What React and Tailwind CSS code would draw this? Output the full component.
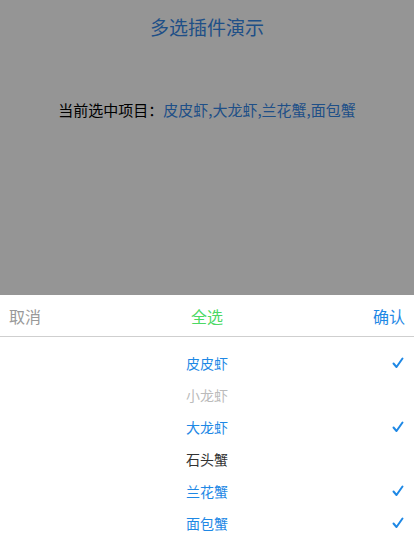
import React, { useState } from 'react';

const items = [
  { name: '皮皮虾', checked: true },
  { name: '小龙虾', disabled: true },
  { name: '大龙虾', checked: true },
  { name: '石头蟹' },
  { name: '兰花蟹', checked: true },
  { name: '面包蟹', checked: true },
];

function Check() {
  return (
    <svg width="12" height="12" viewBox="0 0 12 12" className="text-[#1e88e5]">
      <path d="M1.5 6.5 L4.5 10 L10.5 1.5" fill="none" stroke="currentColor" strokeWidth="2" strokeLinecap="round" strokeLinejoin="round" />
    </svg>
  );
}

export default function App() {
  const [list] = useState(items);
  const selected = list.filter((i) => i.checked).map((i) => i.name).join(',');

  return (
    <div className="relative h-[557px] w-[414px] overflow-hidden bg-white font-['Noto_Sans_CJK_SC',sans-serif]">
      {/* page behind the picker */}
      <div className="flex flex-col items-center">
        <h1 className="mt-[13px] text-[19px] leading-[28px] text-[#3688e8]">多选插件演示</h1>
        <p className="mt-[58px] text-[15px] leading-[22px] text-black">
          当前选中项目：<span className="text-[#3688e8]">{selected}</span>
        </p>
      </div>

      {/* mask */}
      <div className="absolute inset-0 bg-black/[0.415]"></div>

      {/* bottom sheet */}
      <div className="absolute bottom-0 left-0 right-0 h-[262px] bg-white">
        <div className="flex h-[42px] items-center justify-between border-b border-[#cfcfcf] px-[9px] text-[16px]">
          <span className="text-[#999]">取消</span>
          <span className="text-[#4cd964]">全选</span>
          <span className="text-[#1e88e5]">确认</span>
        </div>
        <ul className="pt-[10px]">
          {list.map((item) => (
            <li key={item.name} className="relative flex h-[32px] items-center justify-center text-[14px]">
              <span
                className={
                  item.disabled ? 'text-[#bbb]' : item.checked ? 'text-[#1e88e5]' : 'text-[#333]'
                }
              >
                {item.name}
              </span>
              {item.checked && (
                <span className="absolute right-[10px] top-1/2 -translate-y-1/2">
                  <Check />
                </span>
              )}
            </li>
          ))}
        </ul>
      </div>
    </div>
  );
}
